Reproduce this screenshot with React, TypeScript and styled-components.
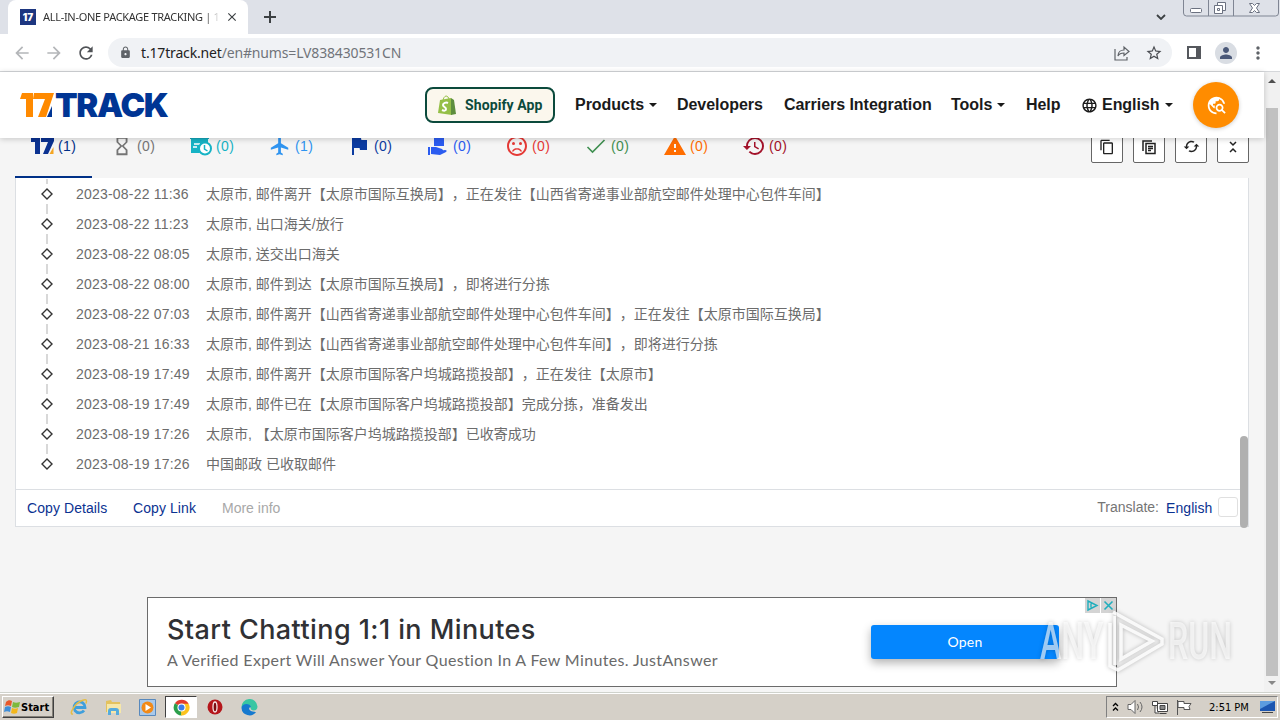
import React from "react";
import styled, { createGlobalStyle } from "styled-components";
import {
  MdArrowBack,
  MdArrowForward,
  MdCached,
  MdClose,
  MdContentCopy,
  MdFlag,
  MdFlight,
  MdHistory,
  MdHourglassEmpty,
  MdLanguage,
  MdLock,
  MdMoreVert,
  MdOutlineSentimentDissatisfied,
  MdPerson,
  MdRefresh,
  MdStarBorder,
  MdTravelExplore,
  MdWarning,
} from "react-icons/md";

const events = [
  ["2023-08-22 11:36", "太原市, 邮件离开【太原市国际互换局】，正在发往【山西省寄递事业部航空邮件处理中心包件车间】"],
  ["2023-08-22 11:23", "太原市, 出口海关/放行"],
  ["2023-08-22 08:05", "太原市, 送交出口海关"],
  ["2023-08-22 08:00", "太原市, 邮件到达【太原市国际互换局】，即将进行分拣"],
  ["2023-08-22 07:03", "太原市, 邮件离开【山西省寄递事业部航空邮件处理中心包件车间】，正在发往【太原市国际互换局】"],
  ["2023-08-21 16:33", "太原市, 邮件到达【山西省寄递事业部航空邮件处理中心包件车间】，即将进行分拣"],
  ["2023-08-19 17:49", "太原市, 邮件离开【太原市国际客户坞城路揽投部】，正在发往【太原市】"],
  ["2023-08-19 17:49", "太原市, 邮件已在【太原市国际客户坞城路揽投部】完成分拣，准备发出"],
  ["2023-08-19 17:26", "太原市, 【太原市国际客户坞城路揽投部】已收寄成功"],
  ["2023-08-19 17:26", "中国邮政 已收取邮件"],
];

const filters = [
  { icon: <SmallLogo />, count: 1, color: "#003087" },
  { icon: <MdHourglassEmpty size={22} />, count: 0, color: "#757575" },
  { icon: <InfoReceivedIcon />, count: 0, color: "#16b3c5" },
  { icon: <MdFlight size={22} />, count: 1, color: "#2f94f0" },
  { icon: <MdFlag size={24} />, count: 0, color: "#0b3ba0" },
  { icon: <HandIcon />, count: 0, color: "#2b5cf0" },
  { icon: <MdOutlineSentimentDissatisfied size={24} />, count: 0, color: "#e53935" },
  { icon: <CheckIcon />, count: 0, color: "#3f8f50" },
  { icon: <MdWarning size={24} />, count: 0, color: "#ff6d00" },
  { icon: <MdHistory size={24} />, count: 0, color: "#a3122a" },
];

function SmallLogo() {
  return (
    <svg width="23" height="20" viewBox="0 0 23 20">
      <path d="M0 1h9v17H4V6H0zM10 1h13v4l-6 13h-5l5-12h-7z" fill="#0b3291" />
      <path d="M22.500 11v7h-4z" fill="#f5a623" />
    </svg>
  );
}

function InfoReceivedIcon() {
  return (
    <svg width="23" height="22" viewBox="0 0 23 22">
      <path d="M2 2h17v7a7 7 0 0 0-8 9H2z" fill="#16b3c5" />
      <path d="M1 1h19v3H1z" fill="#16a5b8" />
      <path d="M5 9h6M4 12h4" stroke="#fff" strokeWidth="1.5" />
      <circle cx="16" cy="13.500" r="6" fill="#fff" stroke="#16b3c5" strokeWidth="2" />
      <path d="M15.500 10V14l3 2" fill="none" stroke="#16b3c5" strokeWidth="1.5" />
    </svg>
  );
}

function HandIcon() {
  return (
    <svg width="22" height="22" viewBox="0 0 22 22" fill="#2b5cf0">
      <path d="M7 2h10v9H7zM1 12h2v8H1zM4 12h5l6 2c1 .5 1 2 0 2h-4l7-1c2 0 2 1 1 2l-6 3-9-1z" />
    </svg>
  );
}

function CheckIcon() {
  return (
    <svg width="20" height="20" viewBox="0 0 20 20" fill="none" stroke="#3f8f50" strokeWidth="1.600">
      <path d="M1.500 11l5 5L18.500 4" />
    </svg>
  );
}

function Logo() {
  return (
    <LogoMark width="152" height="40" viewBox="0 -7 152 40">
      <path d="M2 1h11v24H6V7H0zM14 1h20l-8 24h-8l7-18H13z" fill="#ff8a00" />
      <path d="M32 14v11h-5z" fill="#003594" />
      <LogoText x="35" y="25">TRACK</LogoText>
    </LogoMark>
  );
}

function ShopifyIcon() {
  return (
    <svg width="18" height="21" viewBox="0 0 18 21">
      <path d="M2 5l11-2 1 17-14-2z" fill="#95bf47" />
      <path d="M13 3l3 2 2 14-5 1z" fill="#5e8e3e" />
      <path d="M5 6c0-3 2-5 3-5s3 1 3 4" fill="none" stroke="#95bf47" />
      <path d="M10 8c-2-1-5 0-5 2s3 2 3 4-2 2-4 1" fill="none" stroke="#fff" strokeWidth="2" />
    </svg>
  );
}

function Watermark() {
  return (
    <WatermarkLayer>
      <svg width="206" height="74" viewBox="0 -4 206 74">
        <WatermarkText transform="translate(3 51) scale(.63 1)">ANY</WatermarkText>
        <WatermarkText transform="translate(131 51) scale(.63 1)">RUN</WatermarkText>
        <path d="M76 4l49 27v5L81 62l-8-4V15M84 17l31 16-31 18zM78 8v49" fill="none" stroke="#fff" strokeOpacity=".85" strokeWidth="3.500" />
      </svg>
    </WatermarkLayer>
  );
}

function BrowserChrome() {
  return (
    <>
      <TabStrip>
        <BrowserTab>
          <Favicon>17</Favicon>
          <TabTitle>ALL-IN-ONE PACKAGE TRACKING | 1</TabTitle>
          <MdClose size={14} />
        </BrowserTab>
        <NewTab>
          <svg width="12" height="12" stroke="#3c4043" strokeWidth="2"><path d="M6 0v12M0 6h12" /></svg>
        </NewTab>
        <TabSearch width="10" height="6"><path d="M1 1l4 4 4-4" /></TabSearch>
        <WindowControls>
          <svg width="96" height="17" fill="none" stroke="#6b7180">
            <path d="M.5 0v13q0 3 3 3h89q3 0 3-3V0M25.500 0v16M50.500 0v16" stroke="#7f8593" />
            <rect x="7.500" y="8.500" width="11" height="4" rx="1" fill="#fff" />
            <path d="M34.500 5V2.500h8v8H40M31.500 5.500h8v8h-8zM34.500 8.500h2v2h-2z" fill="#fff" />
            <path d="M66.500 3.500h3l2 2 2-2h3l-3 4.500 3 4.500h-3l-2-2-2 2h-3l3-4.500z" fill="#fff" />
          </svg>
        </WindowControls>
      </TabStrip>
      <Toolbar>
        <NavIcon $muted><MdArrowBack size={20} /></NavIcon>
        <NavIcon $muted><MdArrowForward size={20} /></NavIcon>
        <NavIcon><MdRefresh size={20} /></NavIcon>
        <AddressBar>
          <MdLock size={13} color="#5f6368" />
          <Url><b>t.17track.net</b>/en#nums=LV838430531CN</Url>
          <svg width="16" height="16" fill="none" stroke="#5f6368" strokeWidth="1.200">
            <path d="M1 4v11h12v-3M4 11c0-4 3-6 6-6V2l5 4.500-5 4V8c-3 0-5 1-6 3z" />
          </svg>
          <MdStarBorder size={18} color="#4a4d52" />
        </AddressBar>
        <SidePanel />
        <Avatar><MdPerson size={18} /></Avatar>
        <MdMoreVert size={20} color="#5f6368" />
      </Toolbar>
    </>
  );
}

function SiteHeader() {
  return (
    <Header>
      <Logo />
      <ShopifyButton><ShopifyIcon />Shopify App</ShopifyButton>
      <Menu>
        <MenuItem $width={102}>Products<Caret /></MenuItem>
        <MenuItem $width={107}>Developers</MenuItem>
        <MenuItem $width={167}>Carriers Integration</MenuItem>
        <MenuItem $width={75}>Tools<Caret /></MenuItem>
        <MenuItem $width={55}>Help</MenuItem>
        <MenuItem $width={112}><MdLanguage size={17} /><Language>English</Language><Caret /></MenuItem>
      </Menu>
      <SearchButton><MdTravelExplore size={21} /></SearchButton>
    </Header>
  );
}

function FilterBar() {
  return (
    <Filters>
      {filters.map((f, i) => (
        <Filter key={i} $color={f.color} $active={i === 0}>
          <FilterIcon>{f.icon}</FilterIcon>
          ({f.count})
        </Filter>
      ))}
      <Actions>
        <Action><MdContentCopy size={16} /></Action>
        <Action>
          <svg width="16" height="16" fill="none" stroke="#222" strokeWidth="1.500">
            <path d="M2 12V2h9M5 4.500h9v10H5zM7 7.500h5M7 9.500h5M7 11.500h3" />
          </svg>
        </Action>
        <Action><MdCached size={17} /></Action>
        <Action>
          <svg width="10" height="14" fill="none" stroke="#222" strokeWidth="1.500"><path d="M2 2l3 3 3-3M2 12l3-3 3 3" /></svg>
        </Action>
      </Actions>
    </Filters>
  );
}

function TrackingCard() {
  return (
    <Card>
      <EventList>
        {events.map(([date, text], i) => (
          <EventRow key={i} $last={i === events.length - 1}>
            <Marker><svg width="12" height="12" fill="#fff" stroke="#333" strokeWidth="1.400"><path d="M6 1l5 5-5 5-5-5z" /></svg></Marker>
            <EventDate>{date}</EventDate>
            <EventText>{text}</EventText>
          </EventRow>
        ))}
      </EventList>
      <CardFooter>
        <FooterLink $width={106}>Copy Details</FooterLink>
        <FooterLink $width={89}>Copy Link</FooterLink>
        <MoreInfo>More info</MoreInfo>
        <Translate>Translate:</Translate>
        <FooterLink $width={52}>English</FooterLink>
        <LanguageBox />
      </CardFooter>
      <CardScroll />
    </Card>
  );
}

function AdBanner() {
  return (
    <Ad>
      <AdCopy>
        <AdTitle>Start Chatting 1:1 in Minutes</AdTitle>
        <AdText>A Verified Expert Will Answer Your Question In A Few Minutes. JustAnswer</AdText>
      </AdCopy>
      <AdButton>Open</AdButton>
      <AdChoices>
        <svg width="15" height="15" fill="none" stroke="#20aebd" strokeWidth="1.400"><path d="M3 3l9 4.500-9 4.500zM6 5.500v4" /></svg>
        <svg width="15" height="15" fill="none" stroke="#20aebd" strokeWidth="1.600"><path d="M3.500 3.500l8 8M11.500 3.500l-8 8" /></svg>
      </AdChoices>
    </Ad>
  );
}

function Taskbar() {
  return (
    <Bar>
      <StartButton>
        <svg width="17" height="16" viewBox="0 0 17 16">
          <path d="M2 3c2-2 4-2 6-1L7 7C5 6 3 6 1 7z" fill="#e8582a" />
          <path d="M9 3c2 1 4 1 7 0l-1 5c-3 1-5 1-7 0z" fill="#7db93c" />
          <path d="M1 8c2-1 4-1 6 0l-1 5c-2-1-4-1-6 0z" fill="#3f8ed8" />
          <path d="M8 9c2 1 4 1 6 0l-1 5c-2 1-4 1-6 0z" fill="#f3b71b" />
        </svg>
        Start
      </StartButton>
      <TaskSlot>
        <svg width="18" height="18" viewBox="0 0 18 18" fill="none">
          <path d="M14 12.500A5.500 5.500 0 1 1 15 9.500H5" stroke="#3f9fdc" strokeWidth="2.800" />
          <path d="M3 16C-2 17 5 5 12 2.500c5-2 5 0 4 3" stroke="#e5bd45" strokeWidth="1.500" />
        </svg>
      </TaskSlot>
      <TaskSlot>
        <svg width="17" height="17" viewBox="0 0 17 17">
          <path d="M1 2l5-1 1 2h8v10H1z" fill="#e3c25e" />
          <path d="M2 5h14v9H2z" fill="#f6e7a8" />
          <path d="M3 16v-4q0-3 3-3h5q3 0 3 3v4h-3v-4H6v4z" fill="#55abdd" />
        </svg>
      </TaskSlot>
      <TaskSlot>
        <svg width="17" height="17" viewBox="0 0 17 17">
          <path d="M.5.5h16v16H.5z" fill="#a9c9ea" stroke="#5889bd" />
          <circle cx="8.500" cy="8.500" r="6" fill="#f28a17" />
          <path d="M6.500 5l5.500 3.500L6.500 12z" fill="#fff" />
        </svg>
      </TaskSlot>
      <TaskSlot $active>
        <svg width="17" height="17" viewBox="0 0 18 18">
          <path d="M9 9L2 4.500A8.500 8.500 0 0 1 16.500 5z" fill="#e33b2e" />
          <path d="M9 9v8.500A8.500 8.500 0 0 1 2 4.500z" fill="#2c9f4b" />
          <path d="M9 9V5h7.500A8.500 8.500 0 0 1 8.500 17.500z" fill="#fcc31e" />
          <circle cx="9" cy="9" r="4.300" fill="#fff" />
          <circle cx="9" cy="9" r="3.200" fill="#3b7de9" />
        </svg>
      </TaskSlot>
      <TaskSlot>
        <svg width="16" height="16" viewBox="0 0 16 16">
          <circle cx="8" cy="8" r="7.500" fill="#b5161b" />
          <ellipse cx="8" cy="8" rx="2" ry="5" fill="#7c0c10" stroke="#f5e6e6" strokeWidth="1.300" />
        </svg>
      </TaskSlot>
      <TaskSlot>
        <svg width="17" height="17" viewBox="0 0 17 17">
          <path d="M.5 8.500a8 8 0 0 1 16-1c0 4-4 5-6.500 3l-1-3z" fill="#38c6a3" />
          <path d="M.5 9C1 4 9 4 10 8c-3 0-3 5 5 5a8 8 0 0 1-14.500-4z" fill="#1679cf" />
        </svg>
      </TaskSlot>
      <Tray>
        <svg width="7" height="10" fill="none" stroke="#000" strokeWidth="1.300"><path d="M1 4l2.500-2.500L6 4M1 8.500L3.500 6 6 8.500" /></svg>
        <svg width="17" height="14" fill="#fff" stroke="#666"><path d="M1 4.500h3l4-4v13l-4-4H1z" /><path d="M10.500 4q2 3 0 6M13 2q4 5 0 10" fill="none" /></svg>
        <svg width="16" height="15" fill="#fff" stroke="#444"><path d="M5.500 3.500h10v8h-10zM7.500 13.500h7M.5 1.500h5v4h-5zM3 6v7h4" /><path d="M8 5.500h5v4H8z" fill="#888" /></svg>
        <svg width="16" height="15" fill="#fff" stroke="#555"><path d="M1.500 0v15M2 1.500h6v2h7l-2 3 1 3H8v-2H2z" /></svg>
        <Clock>2:51 PM</Clock>
        <svg width="15" height="14"><path d="M0 1h15v10H0z" fill="#1c56b0" /><path d="M0 1h15L0 9z" fill="#5c9cdf" /><path d="M2 12h11v1H2z" fill="#444" /></svg>
      </Tray>
    </Bar>
  );
}

function App() {
  return (
    <Screen>
      <GlobalStyle />
      <BrowserChrome />
      <Viewport>
        <Page>
          <SiteHeader />
          <Content>
            <FilterBar />
            <TrackingCard />
          </Content>
          <AdBanner />
        </Page>
        <Scrollbar>
          <Arrow $up />
          <Thumb />
          <Arrow />
        </Scrollbar>
      </Viewport>
      <Taskbar />
      <Watermark />
    </Screen>
  );
}

export default App;

const GlobalStyle = createGlobalStyle`
  * {
    box-sizing: border-box;
  }

  body {
    margin: 0;
    font-family: "Liberation Sans", "Noto Sans CJK SC", sans-serif;
  }

  svg {
    flex: none;
    display: block;
  }
`;

const Screen = styled.div`
  position: relative;
  width: 1280px;
  height: 720px;
  overflow: hidden;
  display: flex;
  flex-direction: column;
  white-space: nowrap;
`;

const TabStrip = styled.div`
  display: flex;
  height: 34px;
  padding-left: 8px;
  background-color: #dee1e8;
`;

const BrowserTab = styled.div`
  display: flex;
  align-items: center;
  width: 240px;
  padding-left: 12px;
  border-radius: 8px 8px 0 0;
  background-color: #fff;
  color: #3c4043;
`;

const Favicon = styled.div`
  width: 16px;
  height: 16px;
  margin-right: 7px;
  background-color: #1d3680;
  color: #fff;
  font: 900 10px/16px Inter, sans-serif;
  text-align: center;
`;

const TabTitle = styled.div`
  width: 175px;
  height: 17px;
  margin-right: 7px;
  overflow: hidden;
  font: 11px/16px "Noto Sans", sans-serif;
  letter-spacing: -0.3px;
  color: #333;
  mask-image: linear-gradient(90deg, #000 162px, transparent 177px);
`;

const NewTab = styled.div`
  display: flex;
  align-items: center;
  margin-left: 16px;
`;

const TabSearch = styled.svg`
  margin: 14px 17px 0 auto;
  fill: none;
  stroke: #3c4043;
  stroke-width: 1.8;
`;

const WindowControls = styled.div`
  width: 97px;
`;

const Toolbar = styled.div`
  display: flex;
  align-items: center;
  height: 38px;
  padding: 0 12px;
  border-bottom: 1px solid #d5d7da;
  background-color: #fff;
`;

const NavIcon = styled.div<{ $muted?: boolean }>`
  display: flex;
  width: 32px;
  color: ${(p) => (p.$muted ? "#b4b6b9" : "#505357")};
`;

const AddressBar = styled.div`
  display: flex;
  align-items: center;
  gap: 15px;
  width: 1064px;
  height: 29px;
  padding: 0 9px 0 11px;
  border-radius: 15px;
  background-color: #f0f2f5;
`;

const Url = styled.div`
  flex: 1;
  margin-left: -6px;
  font: 14px "Noto Sans", sans-serif;
  letter-spacing: -0.16px;
  color: #70747a;

  b {
    font-weight: 400;
    color: #222;
  }
`;

const SidePanel = styled.div`
  width: 14px;
  height: 13px;
  margin: 0 21px 0 15px;
  border: 2px solid #55585d;
  border-right-width: 5px;
`;

const Avatar = styled.div`
  display: flex;
  align-items: center;
  justify-content: center;
  width: 22px;
  height: 22px;
  margin-right: 11px;
  margin-left: -7px;
  border-radius: 50%;
  background-color: #d9dde3;
  color: #4a5878;
`;

const Viewport = styled.div`
  display: flex;
  height: 620px;
`;

const Page = styled.div`
  width: 1264px;
  background-color: #f5f5f5;
`;

const Header = styled.div`
  position: relative;
  z-index: 1;
  display: flex;
  align-items: center;
  height: 66px;
  padding-left: 20px;
  background-color: #fff;
  box-shadow: 0 1px 6px rgba(0, 0, 0, 0.2);
`;

const LogoMark = styled.svg`
  margin-right: -3px;
  overflow: visible;
`;

const LogoText = styled.text`
  fill: #003594;
  font: 900 33px Inter, sans-serif;
  letter-spacing: -1.3px;
`;

const ShopifyButton = styled.div`
  display: flex;
  align-items: center;
  gap: 9px;
  width: 130px;
  height: 36px;
  margin-left: 256px;
  padding-left: 11px;
  border: 2px solid #0b4a3c;
  border-radius: 8px;
  background-color: #fbf7ed;
  color: #0b4a3c;
  font: 700 14px Roboto, sans-serif;
  letter-spacing: 0.1px;
`;

const Menu = styled.div`
  display: flex;
  margin-left: 20px;
`;

const MenuItem = styled.div<{ $width: number }>`
  display: flex;
  align-items: center;
  width: ${(p) => p.$width}px;
  color: #1a1a1a;
  font-size: 16px;
  font-weight: 700;
  letter-spacing: -0.04px;
`;

const Caret = styled.span`
  margin-left: 5px;
  border: 4px solid transparent;
  border-top-color: #1a1a1a;
  border-bottom: 0;
`;

const Language = styled.span`
  margin-left: 4px;
`;

const SearchButton = styled.div`
  display: flex;
  align-items: center;
  justify-content: center;
  width: 46px;
  height: 46px;
  border-radius: 50%;
  background-color: #ff8c00;
  color: #fff;
  box-shadow: 0 1px 4px rgba(0, 0, 0, 0.2);
`;

const Content = styled.div`
  margin-top: -8px;
  padding: 0 15px;
`;

const Filters = styled.div`
  display: flex;
  height: 48px;
`;

const Filter = styled.div<{ $color: string; $active: boolean }>`
  display: flex;
  align-items: center;
  width: ${(p) => (p.$active ? 77 : 79)}px;
  margin-right: ${(p) => (p.$active ? 2 : 0)}px;
  padding: 0 0 14px 16px;
  border-bottom: ${(p) => (p.$active ? "2px solid #003087" : "2px solid transparent")};
  color: ${(p) => p.$color};
  font-size: 14px;
  letter-spacing: 0.4px;
`;

const FilterIcon = styled.div`
  display: flex;
  justify-content: center;
  width: 23px;
  margin-right: 4px;
`;

const Actions = styled.div`
  display: flex;
  gap: 10px;
  margin-left: auto;
`;

const Action = styled.div`
  display: flex;
  align-items: center;
  justify-content: center;
  width: 32px;
  height: 33px;
  border: 1px solid #666;
  border-radius: 2px;
  background-color: #fff;
  color: #222;
`;

const Card = styled.div`
  position: relative;
  height: 349px;
  border: 1px solid #dcdfe3;
  border-top: 0;
  background-color: #fff;
`;

const EventList = styled.div`
  height: 311px;
  padding-top: 1px;
`;

const EventRow = styled.div<{ $last: boolean }>`
  display: flex;
  align-items: center;
  height: 30px;
  padding-left: 20px;
  color: #6c6c6c;
  font-size: 14px;
  background: linear-gradient(#d8d8d8, #d8d8d8) 30px 0 / 2px ${(p) => (p.$last ? "5px" : "100%")} no-repeat;
`;

const Marker = styled.div`
  display: flex;
  align-items: center;
  justify-content: center;
  width: 22px;
  height: 20px;
  background-color: #fff;
`;

const EventDate = styled.div`
  width: 148px;
  padding-left: 18px;
  letter-spacing: 0.2px;
`;

const EventText = styled.div`
  margin-bottom: 2px;
  text-spacing-trim: space-all;
`;

const CardFooter = styled.div`
  display: flex;
  align-items: center;
  height: 37px;
  padding: 0 10px 0 11px;
  border-top: 1px solid #dcdfe3;
  font-size: 14px;
`;

const FooterLink = styled.div<{ $width: number }>`
  width: ${(p) => p.$width}px;
  color: #0b3291;
  letter-spacing: 0.08px;
`;

const MoreInfo = styled.div`
  color: #a8a8a8;
`;

const Translate = styled.div`
  margin: 0 7px 2px auto;
  color: #757575;
`;

const LanguageBox = styled.div`
  width: 20px;
  height: 20px;
  margin-bottom: 2px;
  border: 1px solid #e0e0e0;
  border-radius: 3px;
`;

const CardScroll = styled.div`
  position: absolute;
  right: 0;
  bottom: -2px;
  width: 8px;
  height: 92px;
  border-radius: 4px;
  background-color: #b0b0b0;
`;

const Ad = styled.div`
  position: relative;
  display: flex;
  align-items: center;
  width: 970px;
  height: 90px;
  margin: 70px 0 0 147px;
  padding-left: 19px;
  border: 1px solid #6b6b6b;
  background-color: #fff;
`;

const AdCopy = styled.div`
  width: 704px;
`;

const AdTitle = styled.div`
  padding-top: 1px;
  color: #303134;
  font: 500 27px/35px Inter, sans-serif;
  letter-spacing: 0.42px;
`;

const AdText = styled.div`
  color: #6a6a6a;
  font: 16px/26px Lato, sans-serif;
  letter-spacing: 0.35px;
`;

const AdButton = styled.div`
  width: 188px;
  height: 34px;
  border-radius: 3px;
  background-color: #0486fe;
  box-shadow: 0 4px 10px rgba(0, 0, 0, 0.3);
  color: #fff;
  font: 14px/33px Lato, sans-serif;
  letter-spacing: 0.2px;
  text-align: center;
`;

const AdChoices = styled.div`
  position: absolute;
  top: 0;
  right: 0;
  display: flex;
  gap: 1px;

  svg {
    background-color: #d4d4d4;
  }
`;

const Scrollbar = styled.div`
  display: flex;
  flex-direction: column;
  align-items: center;
  width: 16px;
  padding: 7px 0;
  background-color: #f1f1f1;
`;

const Arrow = styled.div<{ $up?: boolean }>`
  border: 4px solid transparent;
  border-top: ${(p) => (p.$up ? "0" : "4px solid #888")};
  border-bottom: ${(p) => (p.$up ? "4px solid #505050" : "0")};
`;

const Thumb = styled.div`
  width: 12px;
  height: 569px;
  margin: 25px 0 5px;
  background-color: #c1c1c1;
`;

const Bar = styled.div`
  display: flex;
  align-items: center;
  height: 28px;
  padding: 1px 2px 0;
  border-top: 1px solid #cfd2cc;
  background-color: #d5d0c8;
  box-shadow: inset 0 1px 0 #fff;
`;

const StartButton = styled.div`
  display: flex;
  align-items: center;
  width: 52px;
  height: 22px;
  margin-right: 9px;
  padding-left: 1px;
  border: 1px solid;
  border-color: #fff #404040 #404040 #fff;
  box-shadow: inset -1px -1px 0 #848078;
  color: #000;
  font: 700 11px "DejaVu Sans Condensed", "DejaVu Sans", sans-serif;
`;

const TaskSlot = styled.div<{ $active?: boolean }>`
  display: flex;
  align-items: center;
  justify-content: center;
  width: 32px;
  height: 22px;
  margin-right: 2px;
  border: ${(p) => (p.$active ? "1px solid #404040" : "1px solid transparent")};
  border-right-color: ${(p) => (p.$active ? "#fff" : "transparent")};
  border-bottom-color: ${(p) => (p.$active ? "#fff" : "transparent")};
  background-color: ${(p) => (p.$active ? "#fff" : "transparent")};
`;

const Tray = styled.div`
  display: flex;
  align-items: center;
  gap: 8px;
  width: 172px;
  height: 22px;
  margin-left: auto;
  padding-left: 5px;
  border: 1px solid;
  border-color: #808080 #fff #fff #808080;
`;

const Clock = styled.div`
  width: 43px;
  margin: 0 0 0 9px;
  color: #000;
  font: 11px "DejaVu Sans Condensed", "DejaVu Sans", sans-serif;
`;

const WatermarkLayer = styled.div`
  position: absolute;
  top: 604px;
  left: 1037px;
  z-index: 2;
  filter: drop-shadow(0 0 2px rgba(0, 0, 0, 0.3));
`;

const WatermarkText = styled.text`
  fill: rgba(255, 255, 255, 0.62);
  font: 500 51px Roboto, sans-serif;
`;
